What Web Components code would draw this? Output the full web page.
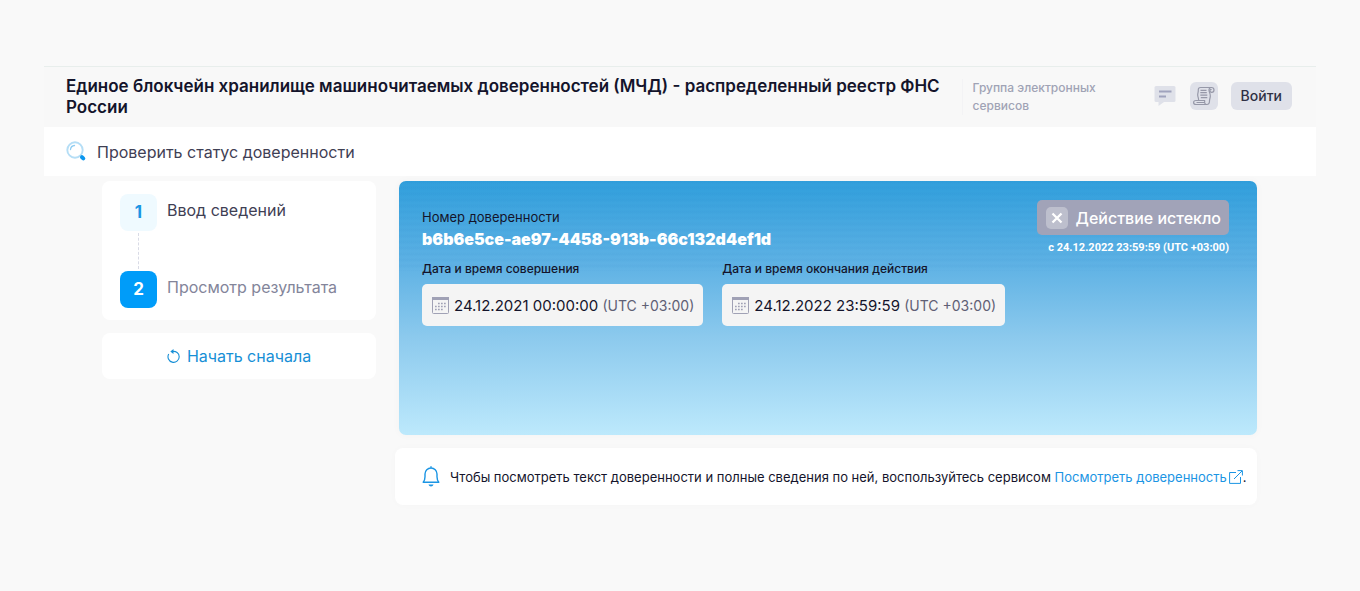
<!DOCTYPE html>
<html lang="ru">
<head>
<meta charset="utf-8">
<meta name="viewport" content="width=device-width, initial-scale=1">
<title>Единое блокчейн хранилище МЧД</title>
<style>
  body {
    margin: 0;
    background: #f9f9f9;
    color: #14142b;
    font-family: Inter, "Noto Sans", sans-serif;
    font-size: 14px;
  }
</style>
</head>
<body>
<poa-application></poa-application>

<script>
/**
 * Defines a custom element with an open shadow root.
 *
 * @param {string} name - The tag name.
 * @param {string} html - Styles and markup of the shadow root.
 */
const define = (name, html) => {
  const template = document.createElement('template')
  template.innerHTML = html

  customElements.define(name, class extends HTMLElement {
    constructor () {
      super()
      this.attachShadow({ mode: 'open' })
        .appendChild(template.content.cloneNode(true))
    }
  })
}

define('app-header', `
  <style>
    :host {
      display: flex;
      align-items: center;
      box-sizing: border-box;
      min-height: 61px;
      padding: 0 24px 0 22px;
      border-top: 1px solid #e8eeec;
      background: #f8f8f8;
    }
    h1 {
      flex: 1;
      margin: 0;
      font-size: 17px;
      font-weight: 600;
      line-height: 21px;
    }
    .group {
      box-sizing: border-box;
      width: 184px;
      padding: 0 40px 0 10px;
      border-left: 1px solid #f3f3f5;
      color: #a0a3b5;
      font-size: 12px;
      font-weight: 500;
      line-height: 18px;
    }
    .actions {
      display: flex;
      align-items: center;
      gap: 13px;
      padding: 0 0 2px 7px;
    }
    button {
      display: flex;
      align-items: center;
      justify-content: center;
      height: 28px;
      padding: 0;
      border: 0;
      border-radius: 6px;
      background: #dfe1e9;
      color: #2f3044;
      font: 500 14px/20px Inter, "Noto Sans", sans-serif;
      cursor: pointer;
    }
    .chat {
      width: 24px;
      background: none;
    }
    .scroll {
      width: 28px;
    }
    .login {
      padding: 0 10px;
    }
  </style>
  <h1><slot></slot></h1>
  <div class="group"><slot name="group"></slot></div>
  <div class="actions">
    <button class="chat" type="button" aria-label="Сообщения">
      <svg width="22" height="22" viewBox="0 0 22 22">
        <path d="M2 1h18a1.5 1.5 0 0 1 1.5 1.5v13a1.5 1.5 0 0 1-1.5 1.5H10l-5.500 4v-4H2A1.5 1.5 0 0 1 .5 15.500v-13A1.5 1.5 0 0 1 2 1z" fill="#dfe1e9"/>
        <path d="M5 6.500h12.500M5 11.500h7" stroke="#a0a3bd" stroke-width="2"/>
      </svg>
    </button>
    <button class="scroll" type="button" aria-label="Документы">
      <svg width="24" height="24" viewBox="0 0 24 24" fill="none" stroke="#9698a8" stroke-width="1.2" stroke-linejoin="round">
        <path d="M6.500 16.500c.5-2-.7-3-.8-5.500-.1-2 .8-3 .6-5C6.200 4.300 7 3.500 8.500 3.500h11c1.500 0 2.500 1 2.500 2.500s-1 2.300-2.300 2.300c-1.200 0-1.900-.8-1.800-1.800.1-.9 1-1.200 1.700-.8"/>
        <path d="M19.500 3.500c-1.700 0-2.500 1-2.500 2.500 0 2 1.300 3 1.300 6 0 2-.8 3-.8 5 0 2.300-1 3.500-2.700 3.500H4c-1.500 0-2.400-.9-2.400-2s.9-2 2.400-2h9"/>
        <path d="M13 16.500c-1 1.700-.3 4 1.800 4M4.500 18.500h8"/>
        <path d="M8.500 6.300h6M8.300 8.700h6.500M8.300 11.200h7M8.800 13.700h6.500"/>
      </svg>
    </button>
    <button class="login" type="button">Войти</button>
  </div>
`)

define('service-title', `
  <style>
    :host {
      display: flex;
      align-items: center;
      gap: 10px;
      height: 49px;
      padding: 0 22px;
      background: #fff;
    }
    h2 {
      margin: 0;
      color: #3f4054;
      font-size: 16px;
      font-weight: 400;
      line-height: 24px;
    }
  </style>
  <svg width="21" height="21" viewBox="0 0 21 21" fill="none" stroke-linecap="round" aria-hidden="true">
    <circle cx="9" cy="9" r="7.700" stroke="#b5def6" stroke-width="1.900"/>
    <path d="M4.500 8.500A4.500 4.500 0 0 1 8.500 4.500" stroke="#8fcdf2" stroke-width="1.300"/>
    <path d="M16 16.200l1.300 1.200" stroke="#0b96ee" stroke-width="4"/>
  </svg>
  <h2><slot></slot></h2>
`)

define('step-item', `
  <style>
    :host {
      display: flex;
      gap: 10px;
      color: #3f4054;
      font-size: 16px;
      line-height: 32px;
    }
    .number {
      display: block;
      width: 37px;
      height: 37px;
      border-radius: 8px;
      background: #effaff;
      color: #1b95e4;
      font-size: 17px;
      font-weight: 700;
      line-height: 37px;
      text-align: center;
    }
    :host([active]) {
      color: #83859a;
    }
    :host([active]) .number {
      background: #009cf9;
      color: #fff;
    }
  </style>
  <span class="number"><slot name="number"></slot></span>
  <span><slot></slot></span>
`)

define('step-list', `
  <style>
    :host {
      display: flex;
      flex-direction: column;
      gap: 13px;
    }
    .card {
      display: flex;
      flex-direction: column;
      padding: 13px 18px 12px;
      border-radius: 8px;
      background: #fff;
    }
    .line {
      height: 36px;
      margin: 2px 0 2px 18px;
      border-left: 1px dashed #d9dbe6;
    }
    button {
      display: flex;
      align-items: center;
      justify-content: center;
      gap: 7px;
      height: 46px;
      padding: 0;
      border: 0;
      border-radius: 8px;
      background: #fff;
      color: #168fd6;
      font: 400 16px/24px Inter, "Noto Sans", sans-serif;
      cursor: pointer;
    }
  </style>
  <div class="card">
    <step-item><span slot="number">1</span>Ввод сведений</step-item>
    <div class="line"></div>
    <step-item active><span slot="number">2</span>Просмотр результата</step-item>
  </div>
  <button type="button">
    <svg width="13" height="14" viewBox="0 0 13 14" fill="none" stroke="#168fd6" aria-hidden="true">
      <path d="M5 2.500c4-.7 7.200 1.500 7.200 5.200a5.600 5.600 0 1 1-10.500-2.700" stroke-width="1.100"/>
      <path d="M6.500 0L3.300 2.500 6.500 5z" fill="#168fd6" stroke="none"/>
    </svg>
    Начать сначала
  </button>
`)

define('date-field', `
  <style>
    :host {
      display: block;
    }
    .label {
      margin-bottom: 6px;
      font-size: 12px;
      font-weight: 500;
      line-height: 18px;
    }
    .value {
      display: flex;
      align-items: center;
      gap: 5px;
      height: 42px;
      padding: 0 9px 0 10px;
      border-radius: 5px;
      background: #f4f4f4;
      font-size: 15px;
      white-space: nowrap;
    }
  </style>
  <div class="label"><slot name="label"></slot></div>
  <div class="value">
    <svg width="17" height="17" viewBox="0 0 17 17" aria-hidden="true">
      <rect x=".5" y=".5" width="16" height="16" rx="1" fill="none" stroke="#a0a1b5"/>
      <path d="M0 0h17v3H0z" fill="#a0a1b5"/>
      <path d="M6 6.500h9M3 9.500h12M3 12.500h9" stroke="#a0a1b5" stroke-width="1.700" stroke-dasharray="1.700 1.300"/>
    </svg>
    <span><slot></slot></span>
  </div>
`)

define('status-badge', `
  <style>
    :host {
      display: flex;
      flex-direction: column;
      align-items: flex-end;
      gap: 4px;
      color: #fff;
    }
    .badge {
      display: flex;
      align-items: center;
      gap: 8px;
      height: 35px;
      padding: 0 8px 0 9px;
      border-radius: 5px;
      background: #a1a3b8;
      font-size: 16px;
      font-weight: 500;
    }
    .date {
      font-family: Roboto, sans-serif;
      font-size: 11px;
      font-weight: 700;
      line-height: 18px;
    }
  </style>
  <div class="badge">
    <svg width="22" height="22" viewBox="0 0 22 22" aria-hidden="true">
      <rect width="22" height="22" rx="5" fill="#bdbfcd"/>
      <path d="M6.500 6.500l9 9M15.500 6.500l-9 9" stroke="#fff" stroke-width="2.300"/>
    </svg>
    <slot></slot>
  </div>
  <div class="date"><slot name="date"></slot></div>
`)

define('poa-card', `
  <style>
    :host {
      display: block;
      box-sizing: border-box;
      min-height: 254px;
      margin-left: 4px;
      padding: 19px 28px 28px 23px;
      border-radius: 7px;
      background:
        repeating-linear-gradient(rgba(0, 90, 170, 0.03) 0 2px, transparent 3px 5px, rgba(0, 90, 170, 0.03) 6px) top / 100% 90px no-repeat,
        linear-gradient(#319fdc, #5db1e4 32%, #8bc9ed 61%, #bde9fc);
      box-shadow: 0 0 8px rgba(0, 0, 0, 0.03);
    }
    .top {
      display: flex;
      justify-content: space-between;
    }
    .label {
      padding-top: 7px;
      font-size: 13px;
      line-height: 20px;
    }
    .id {
      color: #fff;
      font-size: 16px;
      font-weight: 900;
      line-height: 24px;
    }
    .dates {
      display: flex;
      gap: 19px;
      margin-top: 3px;
    }
    .zone {
      color: #5f6075;
      font-size: 14px;
    }
  </style>
  <div class="top">
    <div>
      <div class="label">Номер доверенности</div>
      <div class="id">b6b6e5ce-ae97-4458-913b-66c132d4ef1d</div>
    </div>
    <status-badge>
      Действие истекло
      <span slot="date">с 24.12.2022 23:59:59 (UTC +03:00)</span>
    </status-badge>
  </div>
  <div class="dates">
    <date-field>
      <span slot="label">Дата и время совершения</span>
      24.12.2021 00:00:00 <span class="zone">(UTC +03:00)</span>
    </date-field>
    <date-field>
      <span slot="label">Дата и время окончания действия</span>
      24.12.2022 23:59:59 <span class="zone">(UTC +03:00)</span>
    </date-field>
  </div>
`)

define('service-notice', `
  <style>
    :host {
      display: flex;
      align-items: center;
      gap: 10px;
      min-height: 57px;
      padding: 0 8px 0 27px;
      border-radius: 8px;
      background: #fff;
      box-shadow: 0 0 8px rgba(0, 0, 0, 0.02);
    }
    p {
      margin: 0;
      font-size: 13px;
      line-height: 20px;
    }
    a {
      color: #1b95e4;
      text-decoration: none;
    }
    a svg {
      margin-left: 2px;
      vertical-align: -2px;
    }
  </style>
  <svg width="18" height="21" viewBox="0 0 18 21" fill="none" stroke="#1b95e4" stroke-width="1.400" stroke-linejoin="round" aria-hidden="true">
    <path d="M1.200 16.200c1.300-1.500 1.800-3 1.800-5.500V8a6 6 0 0 1 12 0v2.700c0 2.500.5 4 1.800 5.500z"/>
    <path d="M9 .3v1.500"/>
    <path d="M6.500 18.500h5c-.4 1.300-1.300 2-2.500 2s-2.100-.7-2.500-2z" fill="#1b95e4" stroke="none"/>
  </svg>
  <p>
    Чтобы посмотреть текст доверенности и полные сведения по ней, воспользуйтесь сервисом
    <a href="#">Посмотреть доверенность<svg width="14" height="14" viewBox="0 0 14 14" fill="none" stroke="#1b95e4" aria-hidden="true"><path d="M7 2.500H.6v10.900h10.900V7M5 9l8-8M8.500.6h4.900v4.900"/></svg></a>.
  </p>
`)

define('poa-application', `
  <style>
    :host {
      display: block;
      padding: 66px 44px;
    }
    main {
      display: grid;
      grid-template-columns: 274px 1fr;
      align-items: start;
      gap: 19px;
      padding: 5px 59px 0 58px;
    }
    .result {
      display: flex;
      flex-direction: column;
      gap: 13px;
    }
  </style>
  <app-header>
    Единое блокчейн хранилище машиночитаемых доверенностей (МЧД) - распределенный реестр ФНС России
    <span slot="group">Группа электронных сервисов</span>
  </app-header>
  <service-title>Проверить статус доверенности</service-title>
  <main>
    <step-list></step-list>
    <div class="result">
      <poa-card></poa-card>
      <service-notice></service-notice>
    </div>
  </main>
`)
</script>
</body>
</html>
